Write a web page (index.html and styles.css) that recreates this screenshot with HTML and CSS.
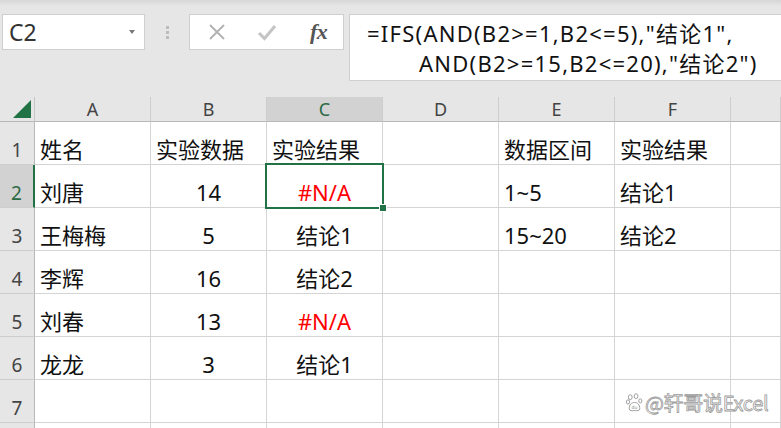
FILE: index.html
```html
<!DOCTYPE html>
<html lang="zh">
<head>
<meta charset="utf-8">
<link rel="stylesheet" href="styles.css">
</head>
<body>
<div class="app">
  <div class="topbar">
    <div class="namebox"><span class="ref">C2</span><span class="caret"></span></div>
    <div class="grip"><i></i><i></i><i></i></div>
    <div class="btnbox">
      <svg class="ico" width="22" height="22" viewBox="0 0 22 22"><path d="M4 4L18 18M18 4L4 18" stroke="#b3b3b3" stroke-width="2" fill="none"/></svg>
      <svg class="ico" width="22" height="22" viewBox="0 0 22 22"><path d="M3 12L8.5 17.5L19 5" stroke="#c4c4c4" stroke-width="3" fill="none"/></svg>
      <span class="fx">fx</span>
    </div>
    <div class="formula">
      <div class="fline">=IFS(AND(B2&gt;=1,B2&lt;=5),"结论1",</div>
      <div class="fline indent">AND(B2&gt;=15,B2&lt;=20),"结论2")</div>
    </div>
  </div>
  <div class="sheet">
    <div class="corner"><span class="tri"></span></div>
    <div class="ch">A</div><div class="ch">B</div><div class="ch sel">C</div><div class="ch">D</div><div class="ch">E</div><div class="ch">F</div><div class="ch"></div>

    <div class="rh">1</div>
    <div class="c">姓名</div><div class="c">实验数据</div><div class="c">实验结果</div><div class="c"></div><div class="c">数据区间</div><div class="c">实验结果</div><div class="c"></div>

    <div class="rh sel">2</div>
    <div class="c">刘唐</div><div class="c mid">14</div><div class="c mid err active">#N/A</div><div class="c"></div><div class="c">1~5</div><div class="c">结论1</div><div class="c"></div>

    <div class="rh">3</div>
    <div class="c">王梅梅</div><div class="c mid">5</div><div class="c mid">结论1</div><div class="c"></div><div class="c">15~20</div><div class="c">结论2</div><div class="c"></div>

    <div class="rh">4</div>
    <div class="c">李辉</div><div class="c mid">16</div><div class="c mid">结论2</div><div class="c"></div><div class="c"></div><div class="c"></div><div class="c"></div>

    <div class="rh">5</div>
    <div class="c">刘春</div><div class="c mid">13</div><div class="c mid err">#N/A</div><div class="c"></div><div class="c"></div><div class="c"></div><div class="c"></div>

    <div class="rh">6</div>
    <div class="c">龙龙</div><div class="c mid">3</div><div class="c mid">结论1</div><div class="c"></div><div class="c"></div><div class="c"></div><div class="c"></div>

    <div class="rh">7</div>
    <div class="c"></div><div class="c"></div><div class="c"></div><div class="c"></div><div class="c"></div><div class="c"></div><div class="c"></div>

    <div class="rh"></div>
    <div class="c"></div><div class="c"></div><div class="c"></div><div class="c"></div><div class="c"></div><div class="c"></div><div class="c"></div>
  </div>
  <div class="watermark">
    <svg class="paw" width="17" height="19" viewBox="0 0 16 18"><g fill="#fff" stroke="#9a9a9a" stroke-width="0.9"><ellipse cx="4" cy="4" rx="1.8" ry="2.3"/><ellipse cx="9.5" cy="3" rx="1.8" ry="2.3"/><ellipse cx="1.8" cy="8.5" rx="1.5" ry="2"/><ellipse cx="13.5" cy="7.5" rx="1.5" ry="2"/><path d="M3 15C3 11 5 9 8 9S13 11 13 15C13 17 10 17 8 16.5C6 17 3 17 3 15Z"/></g><text x="5.2" y="15.5" font-size="4.5" fill="#888" font-family="DejaVu Sans">du</text></svg>
    <span class="wm-text">@轩哥说Excel</span>
  </div>
</div>
</body>
</html>
```
FILE: styles.css
```css
html, body {
  margin: 0;
  padding: 0;
}
body {
  width: 781px;
  height: 428px;
  overflow: hidden;
  background: #e6e6e6;
  font-family: "Noto Sans", "Noto Sans CJK SC", sans-serif;
}
.app {
  position: relative;
  width: 781px;
  height: 428px;
  overflow: hidden;
  background: linear-gradient(#d6d6d6 0, #e6e6e6 6px, #e6e6e6 100%);
}
.topbar {
  display: flex;
  align-items: flex-start;
  height: 97px;
  padding-top: 14px;
  box-sizing: border-box;
}
.namebox {
  margin-left: 2px;
  width: 143px;
  height: 36px;
  box-sizing: border-box;
  background: #fff;
  border: 1px solid #cfcfcf;
  display: flex;
  align-items: center;
  justify-content: space-between;
  padding: 0 9px 0 6px;
}
.ref {
  font-size: 23px;
  color: #333;
  line-height: 1;
}
.caret {
  width: 0;
  height: 0;
  border-left: 3.5px solid transparent;
  border-right: 3.5px solid transparent;
  border-top: 4px solid #777;
}
.grip {
  width: 44px;
  height: 36px;
  display: flex;
  flex-direction: column;
  align-items: center;
  justify-content: center;
  gap: 2px;
}
.grip i {
  width: 3px;
  height: 3px;
  background: #bcbcbc;
}
.btnbox {
  width: 155px;
  height: 36px;
  box-sizing: border-box;
  background: #fff;
  border: 1px solid #cfcfcf;
  display: flex;
  align-items: center;
  padding-left: 16px;
  gap: 28px;
}
.fx {
  font-family: "Liberation Serif", serif;
  font-style: italic;
  font-weight: bold;
  font-size: 22px;
  color: #555;
  margin-left: 4px;
  letter-spacing: -0.5px;
}
.formula {
  margin-left: 5px;
  flex: 1;
  height: 67px;
  box-sizing: border-box;
  background: #fff;
  border: 1px solid #cfcfcf;
  border-right: none;
  padding: 3px 0 0 17px;
  font-size: 22px;
  letter-spacing: 1.25px;
  line-height: 30px;
  color: #111;
  white-space: nowrap;
}
.indent {
  padding-left: 52px;
}
.sheet {
  display: grid;
  grid-template-columns: 35px repeat(6, 116px) 1fr;
  grid-template-rows: 25px repeat(8, 43px);
  background: #fff;
}
.corner {
  background: #e6e6e6;
  border-right: 1px solid #c6c6c6;
  border-bottom: 1px solid #b8b8b8;
  position: relative;
}
.tri {
  position: absolute;
  right: 3px;
  bottom: 3px;
  width: 0;
  height: 0;
  border-left: 18px solid transparent;
  border-bottom: 18px solid #217346;
}
.ch {
  background: #e6e6e6;
  border-right: 1px solid #cdcdcd;
  border-bottom: 1px solid #b8b8b8;
  display: flex;
  align-items: center;
  justify-content: center;
  font-size: 18px;
  color: #444;
}
.ch.sel {
  background: #d2d2d2;
  color: #2b6a45;
}
.rh {
  background: #e6e6e6;
  border-right: 1px solid #b8b8b8;
  border-bottom: 1px solid #cdcdcd;
  display: flex;
  align-items: flex-end;
  justify-content: center;
  padding-bottom: 1px;
  box-sizing: border-box;
  font-size: 19px;
  color: #444;
}
.rh.sel {
  background: #d2d2d2;
  color: #2b6a45;
  border-right: 2px solid #217346;
}
.c {
  border-right: 1px solid #d4d4d4;
  border-bottom: 1px solid #d4d4d4;
  display: flex;
  align-items: flex-end;
  padding: 0 5px 0 5px;
  box-sizing: border-box;
  font-size: 22px;
  line-height: 30px;
  color: #111;
  white-space: nowrap;
}
.c.mid {
  justify-content: center;
}
.c.err {
  color: #ff0000;
}
.c.active {
  position: relative;
}
.c.active::after {
  content: "";
  position: absolute;
  left: -2px;
  top: -2px;
  right: -2px;
  bottom: -2px;
  border: 2px solid #217346;
}
.c.active::before {
  content: "";
  position: absolute;
  right: -5px;
  bottom: -5px;
  width: 6px;
  height: 6px;
  background: #217346;
  border: 1px solid #fff;
  z-index: 2;
}
.watermark {
  position: absolute;
  left: 626px;
  top: 388px;
  display: flex;
  align-items: center;
  gap: 2px;
}
.wm-text {
  font-family: "Noto Sans CJK SC", sans-serif;
  font-size: 20px;
  color: #fff;
  -webkit-text-stroke: 0.8px #9a9a9a;
  letter-spacing: -0.3px;
}
```
